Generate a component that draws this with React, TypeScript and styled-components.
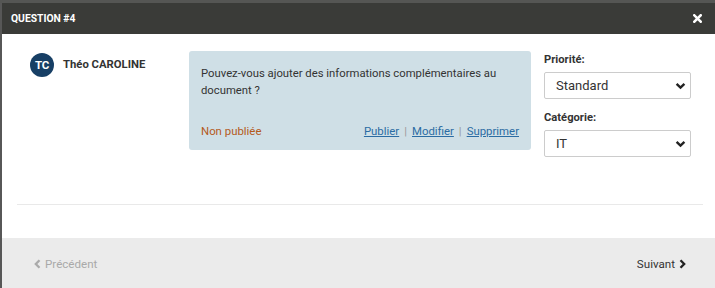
import React from "react";
import styled, { createGlobalStyle } from "styled-components";

const Global = createGlobalStyle`
  html, body { margin: 0; padding: 0; }
  body {
    background: #575757;
    font-family: Roboto, "Liberation Sans", Arial, sans-serif;
    width: 715px;
    height: 288px;
    overflow: hidden;
  }
  *, *::before, *::after { box-sizing: border-box; }
`;

const Page = styled.div`
  position: relative;
  width: 715px;
  height: 288px;
  overflow: hidden;
`;

const BehindStrip = styled.div`
  height: 3px;
  overflow: hidden;
  display: flex;
  justify-content: center;
  background: #555654;
`;

const BehindText = styled.span`
  font-family: "Open Sans", "Liberation Sans", sans-serif;
  font-size: 20px;
  line-height: 20px;
  margin-top: -17px;
  color: #6b2a2e;
`;

const Modal = styled.div`
  margin-left: 2px;
  display: flex;
  flex-direction: column;
  background: #fff;
  height: 285px;
`;

const Header = styled.div`
  height: 31px;
  background: #3a3b38;
  display: flex;
  align-items: center;
  justify-content: space-between;
  padding: 0 13px 0 9px;
`;

const Title = styled.h4`
  margin: 0;
  color: #fff;
  font-size: 10.3px;
  font-weight: 700;
`;

const Close = styled.button`
  border: 0;
  background: none;
  padding: 0;
  color: #fff;
  display: flex;
  align-items: center;
`;

const Body = styled.div`
  flex: 1;
  padding: 17px 15px 0 15px;
  display: flex;
  flex-direction: column;
`;

const Row = styled.div`
  display: flex;
  height: 152px;
`;

const Author = styled.div`
  width: 172px;
  flex-shrink: 0;
  display: flex;
  align-items: center;
  align-self: flex-start;
  gap: 9px;
  padding-left: 13px;
  margin-top: 2px;
`;

const Avatar = styled.div`
  width: 24px;
  height: 24px;
  border-radius: 50%;
  background: #173f65;
  color: #fff;
  font-size: 11.5px;
  font-weight: 700;
  display: flex;
  align-items: center;
  justify-content: center;
  letter-spacing: -0.3px;
`;

const Name = styled.span`
  font-size: 11.3px;
  font-weight: 700;
  color: #333;
  line-height: 24px;
`;

const Bubble = styled.div`
  width: 342px;
  height: 99px;
  flex-shrink: 0;
  background: #cfdfe6;
  border-radius: 3px;
  padding: 14px 12px 12px 12px;
  display: flex;
  flex-direction: column;
  justify-content: space-between;
`;

const Question = styled.p`
  margin: 0;
  font-size: 11.3px;
  line-height: 17px;
  color: #333;
`;

const BubbleFooter = styled.div`
  display: flex;
  justify-content: space-between;
  align-items: center;
  font-size: 11.4px;
`;

const Status = styled.span`
  color: #b45a1c;
`;

const Links = styled.div`
  display: flex;
  align-items: center;
  gap: 5px;
  color: #999;
`;

const Link = styled.a`
  color: #2b6ca3;
  text-decoration: underline;
`;

const Side = styled.div`
  margin-left: 13px;
  width: 147px;
  display: flex;
  flex-direction: column;
  padding-top: 2px;
`;

const Label = styled.label`
  font-size: 11.2px;
  font-weight: 700;
  color: #333;
  line-height: 14px;
  margin-bottom: 5px;
`;

const SelectWrap = styled.div`
  position: relative;
  height: 27px;
  margin-bottom: 12px;
`;

const Select = styled.select`
  appearance: none;
  width: 100%;
  height: 27px;
  border: 1px solid #cccccc;
  border-radius: 2px;
  background: #fff;
  font-family: Roboto, "Liberation Sans", Arial, sans-serif;
  font-size: 13px;
  color: #333;
  padding: 0 10px 0 11px;
`;

const Chevron = styled.svg`
  position: absolute;
  right: 5px;
  top: 10px;
  pointer-events: none;
`;

const Divider = styled.hr`
  margin: 1px 0 0 0;
  border: 0;
  border-top: 1px solid #e9e9e9;
  width: 686px;
`;

const Footer = styled.div`
  height: 51px;
  margin-top: 33px;
  background: #ebebeb;
  display: flex;
  justify-content: space-between;
  align-items: center;
  padding: 2px 29px 0 32px;
`;

const NavButton = styled.button<{ $disabled?: boolean }>`
  border: 0;
  background: none;
  padding: 0;
  font-family: Roboto, "Liberation Sans", Arial, sans-serif;
  font-size: 11.6px;
  color: ${(p) => (p.$disabled ? "#a9a9a9" : "#333")};
  display: flex;
  align-items: center;
  gap: 4px;
`;

const ChevronDown = () => (
  <Chevron width="11" height="8" viewBox="0 0 11 8">
    <path d="M1.6 1.8 L5.5 5.6 L9.4 1.8" fill="none" stroke="#222" strokeWidth="2.4" />
  </Chevron>
);

const Arrow = ({ dir, color }: { dir: "left" | "right"; color: string }) => (
  <svg width="7" height="10" viewBox="0 0 7 10">
    <path
      d={dir === "left" ? "M5.5 1.2 L1.8 5 L5.5 8.8" : "M1.5 1.2 L5.2 5 L1.5 8.8"}
      fill="none"
      stroke={color}
      strokeWidth="2.3"
    />
  </svg>
);

export default function App() {
  return (
    <Page>
      <Global />
      <BehindStrip>
        <BehindText>Démo Farsat VRE</BehindText>
      </BehindStrip>
      <Modal>
        <Header>
          <Title>QUESTION #4</Title>
          <Close aria-label="Fermer">
            <svg width="9" height="9" viewBox="0 0 9 9">
              <path d="M1.3 1.3 L7.7 7.7 M7.7 1.3 L1.3 7.7" stroke="#fff" strokeWidth="2.6" strokeLinecap="square" />
            </svg>
          </Close>
        </Header>
        <Body>
          <Row>
            <Author>
              <Avatar>TC</Avatar>
              <Name>Théo CAROLINE</Name>
            </Author>
            <Bubble>
              <Question>
                Pouvez-vous ajouter des informations complémentaires au document ?
              </Question>
              <BubbleFooter>
                <Status>Non publiée</Status>
                <Links>
                  <Link>Publier</Link>|<Link>Modifier</Link>|<Link>Supprimer</Link>
                </Links>
              </BubbleFooter>
            </Bubble>
            <Side>
              <Label>Priorité:</Label>
              <SelectWrap>
                <Select defaultValue="standard">
                  <option value="standard">Standard</option>
                </Select>
                <ChevronDown />
              </SelectWrap>
              <Label>Catégorie:</Label>
              <SelectWrap>
                <Select defaultValue="it">
                  <option value="it">IT</option>
                </Select>
                <ChevronDown />
              </SelectWrap>
            </Side>
          </Row>
          <Divider />
        </Body>
        <Footer>
          <NavButton $disabled>
            <Arrow dir="left" color="#aaaaaa" />
            Précédent
          </NavButton>
          <NavButton>
            Suivant
            <Arrow dir="right" color="#222" />
          </NavButton>
        </Footer>
      </Modal>
    </Page>
  );
}
